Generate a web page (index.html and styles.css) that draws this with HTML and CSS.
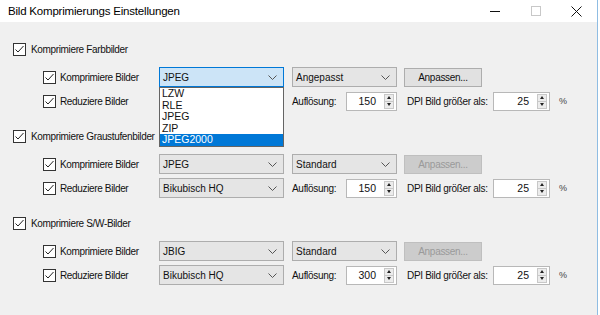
FILE: index.html
```html
<!DOCTYPE html>
<html lang="de">
<head>
    <meta charset="UTF-8">
    <title>Bild Komprimierungs Einstellungen</title>
    <link rel="stylesheet" href="styles.css">
</head>
<body>
    <div class="window">
        <div class="titlebar">
            <span class="title">Bild Komprimierungs Einstellungen</span>
            <div class="controls">
                <span class="ctl"><svg width="10" height="10" viewBox="0 0 10 10"><path d="M0 5.5h10" stroke="#111" stroke-width="1"/></svg></span>
                <span class="ctl"><svg width="10" height="10" viewBox="0 0 10 10"><rect x="0.5" y="0.5" width="9" height="9" fill="none" stroke="#c8c8c8"/></svg></span>
                <span class="ctl"><svg width="11" height="11" viewBox="0 0 11 11"><path d="M0.5 0.5l10 10M10.5 0.5l-10 10" stroke="#111" stroke-width="1"/></svg></span>
            </div>
        </div>

        <div class="content">
            <!-- Farbbilder -->
            <section class="group">
                <label class="check head"><span class="box"><svg width="11" height="11" viewBox="0 0 11 11"><path d="M1.5 5.5l2.5 2.5 5.5-6" fill="none" stroke="#222"/></svg></span>Komprimiere Farbbilder</label>
                <div class="row">
                    <label class="check sub"><span class="box"><svg width="11" height="11" viewBox="0 0 11 11"><path d="M1.5 5.5l2.5 2.5 5.5-6" fill="none" stroke="#222"/></svg></span>Komprimiere Bilder</label>
                    <div class="combo wide focused">
                        <span>JPEG</span>
                        <svg class="chev" width="9" height="5" viewBox="0 0 9 5"><path d="M0.5 0.5l4 4 4-4" fill="none" stroke="#555"/></svg>
                        <ul class="droplist">
                            <li>LZW</li>
                            <li>RLE</li>
                            <li>JPEG</li>
                            <li>ZIP</li>
                            <li class="selected">JPEG2000</li>
                        </ul>
                    </div>
                    <div class="combo narrow">
                        <span>Angepasst</span>
                        <svg class="chev" width="9" height="5" viewBox="0 0 9 5"><path d="M0.5 0.5l4 4 4-4" fill="none" stroke="#555"/></svg>
                    </div>
                    <button class="btn">Anpassen...</button>
                </div>
                <div class="row">
                    <label class="check sub"><span class="box"><svg width="11" height="11" viewBox="0 0 11 11"><path d="M1.5 5.5l2.5 2.5 5.5-6" fill="none" stroke="#222"/></svg></span>Reduziere Bilder</label>
                    <div class="combo wide">
                        <span>Bikubisch HQ</span>
                        <svg class="chev" width="9" height="5" viewBox="0 0 9 5"><path d="M0.5 0.5l4 4 4-4" fill="none" stroke="#555"/></svg>
                    </div>
                    <span class="lbl res">Auflösung:</span>
                    <div class="spin">
                        <span class="val">150</span>
                        <span class="arrows"><i class="up"></i><i class="down"></i></span>
                    </div>
                    <span class="lbl dpi">DPI Bild größer als:</span>
                    <div class="spin small">
                        <span class="val">25</span>
                        <span class="arrows"><i class="up"></i><i class="down"></i></span>
                    </div>
                    <span class="lbl pct">%</span>
                </div>
            </section>

            <!-- Graustufenbilder -->
            <section class="group">
                <label class="check head"><span class="box"><svg width="11" height="11" viewBox="0 0 11 11"><path d="M1.5 5.5l2.5 2.5 5.5-6" fill="none" stroke="#222"/></svg></span>Komprimiere Graustufenbilder</label>
                <div class="row">
                    <label class="check sub"><span class="box"><svg width="11" height="11" viewBox="0 0 11 11"><path d="M1.5 5.5l2.5 2.5 5.5-6" fill="none" stroke="#222"/></svg></span>Komprimiere Bilder</label>
                    <div class="combo wide">
                        <span>JPEG</span>
                        <svg class="chev" width="9" height="5" viewBox="0 0 9 5"><path d="M0.5 0.5l4 4 4-4" fill="none" stroke="#555"/></svg>
                    </div>
                    <div class="combo narrow">
                        <span>Standard</span>
                        <svg class="chev" width="9" height="5" viewBox="0 0 9 5"><path d="M0.5 0.5l4 4 4-4" fill="none" stroke="#555"/></svg>
                    </div>
                    <button class="btn" disabled>Anpassen...</button>
                </div>
                <div class="row">
                    <label class="check sub"><span class="box"><svg width="11" height="11" viewBox="0 0 11 11"><path d="M1.5 5.5l2.5 2.5 5.5-6" fill="none" stroke="#222"/></svg></span>Reduziere Bilder</label>
                    <div class="combo wide">
                        <span>Bikubisch HQ</span>
                        <svg class="chev" width="9" height="5" viewBox="0 0 9 5"><path d="M0.5 0.5l4 4 4-4" fill="none" stroke="#555"/></svg>
                    </div>
                    <span class="lbl res">Auflösung:</span>
                    <div class="spin">
                        <span class="val">150</span>
                        <span class="arrows"><i class="up"></i><i class="down"></i></span>
                    </div>
                    <span class="lbl dpi">DPI Bild größer als:</span>
                    <div class="spin small">
                        <span class="val">25</span>
                        <span class="arrows"><i class="up"></i><i class="down"></i></span>
                    </div>
                    <span class="lbl pct">%</span>
                </div>
            </section>

            <!-- S/W-Bilder -->
            <section class="group">
                <label class="check head"><span class="box"><svg width="11" height="11" viewBox="0 0 11 11"><path d="M1.5 5.5l2.5 2.5 5.5-6" fill="none" stroke="#222"/></svg></span>Komprimiere S/W-Bilder</label>
                <div class="row">
                    <label class="check sub"><span class="box"><svg width="11" height="11" viewBox="0 0 11 11"><path d="M1.5 5.5l2.5 2.5 5.5-6" fill="none" stroke="#222"/></svg></span>Komprimiere Bilder</label>
                    <div class="combo wide">
                        <span>JBIG</span>
                        <svg class="chev" width="9" height="5" viewBox="0 0 9 5"><path d="M0.5 0.5l4 4 4-4" fill="none" stroke="#555"/></svg>
                    </div>
                    <div class="combo narrow">
                        <span>Standard</span>
                        <svg class="chev" width="9" height="5" viewBox="0 0 9 5"><path d="M0.5 0.5l4 4 4-4" fill="none" stroke="#555"/></svg>
                    </div>
                    <button class="btn" disabled>Anpassen...</button>
                </div>
                <div class="row">
                    <label class="check sub"><span class="box"><svg width="11" height="11" viewBox="0 0 11 11"><path d="M1.5 5.5l2.5 2.5 5.5-6" fill="none" stroke="#222"/></svg></span>Reduziere Bilder</label>
                    <div class="combo wide">
                        <span>Bikubisch HQ</span>
                        <svg class="chev" width="9" height="5" viewBox="0 0 9 5"><path d="M0.5 0.5l4 4 4-4" fill="none" stroke="#555"/></svg>
                    </div>
                    <span class="lbl res">Auflösung:</span>
                    <div class="spin">
                        <span class="val">300</span>
                        <span class="arrows"><i class="up"></i><i class="down"></i></span>
                    </div>
                    <span class="lbl dpi">DPI Bild größer als:</span>
                    <div class="spin small">
                        <span class="val">25</span>
                        <span class="arrows"><i class="up"></i><i class="down"></i></span>
                    </div>
                    <span class="lbl pct">%</span>
                </div>
            </section>
        </div>
    </div>
</body>
</html>
```

FILE: styles.css
```css
body {
    margin: 0;
    background-color: #fff;
    font-family: "Liberation Sans", Arial, sans-serif;
    font-size: 10px;
    color: #111;
}
.window {
    width: 597px;
    height: 315px;
    display: flex;
    flex-direction: column;
    border-right: 1px solid #8fbde3;
}
.titlebar {
    height: 22px;
    display: flex;
    align-items: center;
    justify-content: space-between;
    background-color: #fff;
}
.title {
    padding-left: 8px;
    font-size: 11.5px;
    letter-spacing: -0.2px;
    color: #000;
}
.controls {
    display: flex;
    height: 22px;
}
.ctl {
    width: 41px;
    display: flex;
    align-items: center;
    justify-content: center;
}
.content {
    flex: 1;
    background-color: #f0f0f0;
    padding-top: 19px;
}
.group {
    margin-bottom: 17px;
}
.check {
    display: flex;
    align-items: center;
    height: 16px;
    letter-spacing: -0.35px;
}
.check.head {
    padding-left: 13px;
    margin-bottom: 10px;
}
.check.sub {
    padding-left: 43px;
    width: 116px;
    height: 20px;
    flex-shrink: 0;
}
.box {
    width: 11px;
    height: 11px;
    border: 1px solid #333;
    background-color: #fff;
    margin-right: 5px;
    display: flex;
}
.check.sub .box {
    margin-right: 4px;
}
.row {
    display: flex;
    align-items: center;
    height: 20px;
    margin-bottom: 4px;
}
.combo {
    position: relative;
    height: 20px;
    box-sizing: border-box;
    border: 1px solid #adadad;
    background-color: #e5e5e5;
    display: flex;
    align-items: center;
    justify-content: space-between;
    padding: 0 6px 0 3px;
}
.combo.wide {
    width: 125px;
}
.combo.narrow {
    width: 105px;
    margin-left: 8px;
}
.combo.focused {
    background-color: #cce4f7;
    border-color: #0078d7;
    z-index: 2;
}
.droplist {
    position: absolute;
    top: 19px;
    left: -1px;
    width: 125px;
    margin: 0;
    padding: 0;
    list-style: none;
    background-color: #fff;
    border: 1px solid #646464;
    box-sizing: border-box;
    font-size: 10.5px;
}
.droplist li {
    height: 11.5px;
    line-height: 11.5px;
    padding-left: 2px;
}
.droplist li.selected {
    background-color: #0078d7;
    color: #fff;
}
.btn {
    margin-left: 7px;
    width: 78px;
    height: 19px;
    border: 1px solid #adadad;
    background-color: #e1e1e1;
    font-family: inherit;
    font-size: 10px;
    letter-spacing: -0.3px;
    color: #111;
    padding: 0;
}
.btn:disabled {
    background-color: #cccccc;
    border-color: #bfbfbf;
    color: #9a9a9a;
}
.lbl {
    letter-spacing: -0.3px;
}
.lbl.res {
    width: 54px;
    margin-left: 8px;
}
.lbl.dpi {
    width: 86px;
    margin-left: 10px;
}
.lbl.pct {
    margin-left: 9px;
    font-size: 9px;
    color: #444;
}
.spin {
    width: 51px;
    height: 19px;
    box-sizing: border-box;
    border: 1px solid #b8b8b8;
    background-color: #fff;
    display: flex;
    align-items: center;
    justify-content: flex-end;
}
.spin.small {
    width: 57px;
}
.spin .val {
    padding-right: 8px;
    font-size: 10.5px;
}
.arrows {
    width: 10px;
    height: 15px;
    margin-right: 2px;
    display: flex;
    flex-direction: column;
    border: 1px solid #c8c8c8;
    box-sizing: border-box;
}
.arrows i {
    flex: 1;
    background-color: #ececec;
    display: flex;
    align-items: center;
    justify-content: center;
}
.arrows i.up {
    border-bottom: 1px solid #c8c8c8;
}
.arrows i::after {
    content: "";
    border-left: 2.5px solid transparent;
    border-right: 2.5px solid transparent;
}
.arrows i.up::after {
    border-bottom: 3px solid #222;
}
.arrows i.down::after {
    border-top: 3px solid #222;
}
```
